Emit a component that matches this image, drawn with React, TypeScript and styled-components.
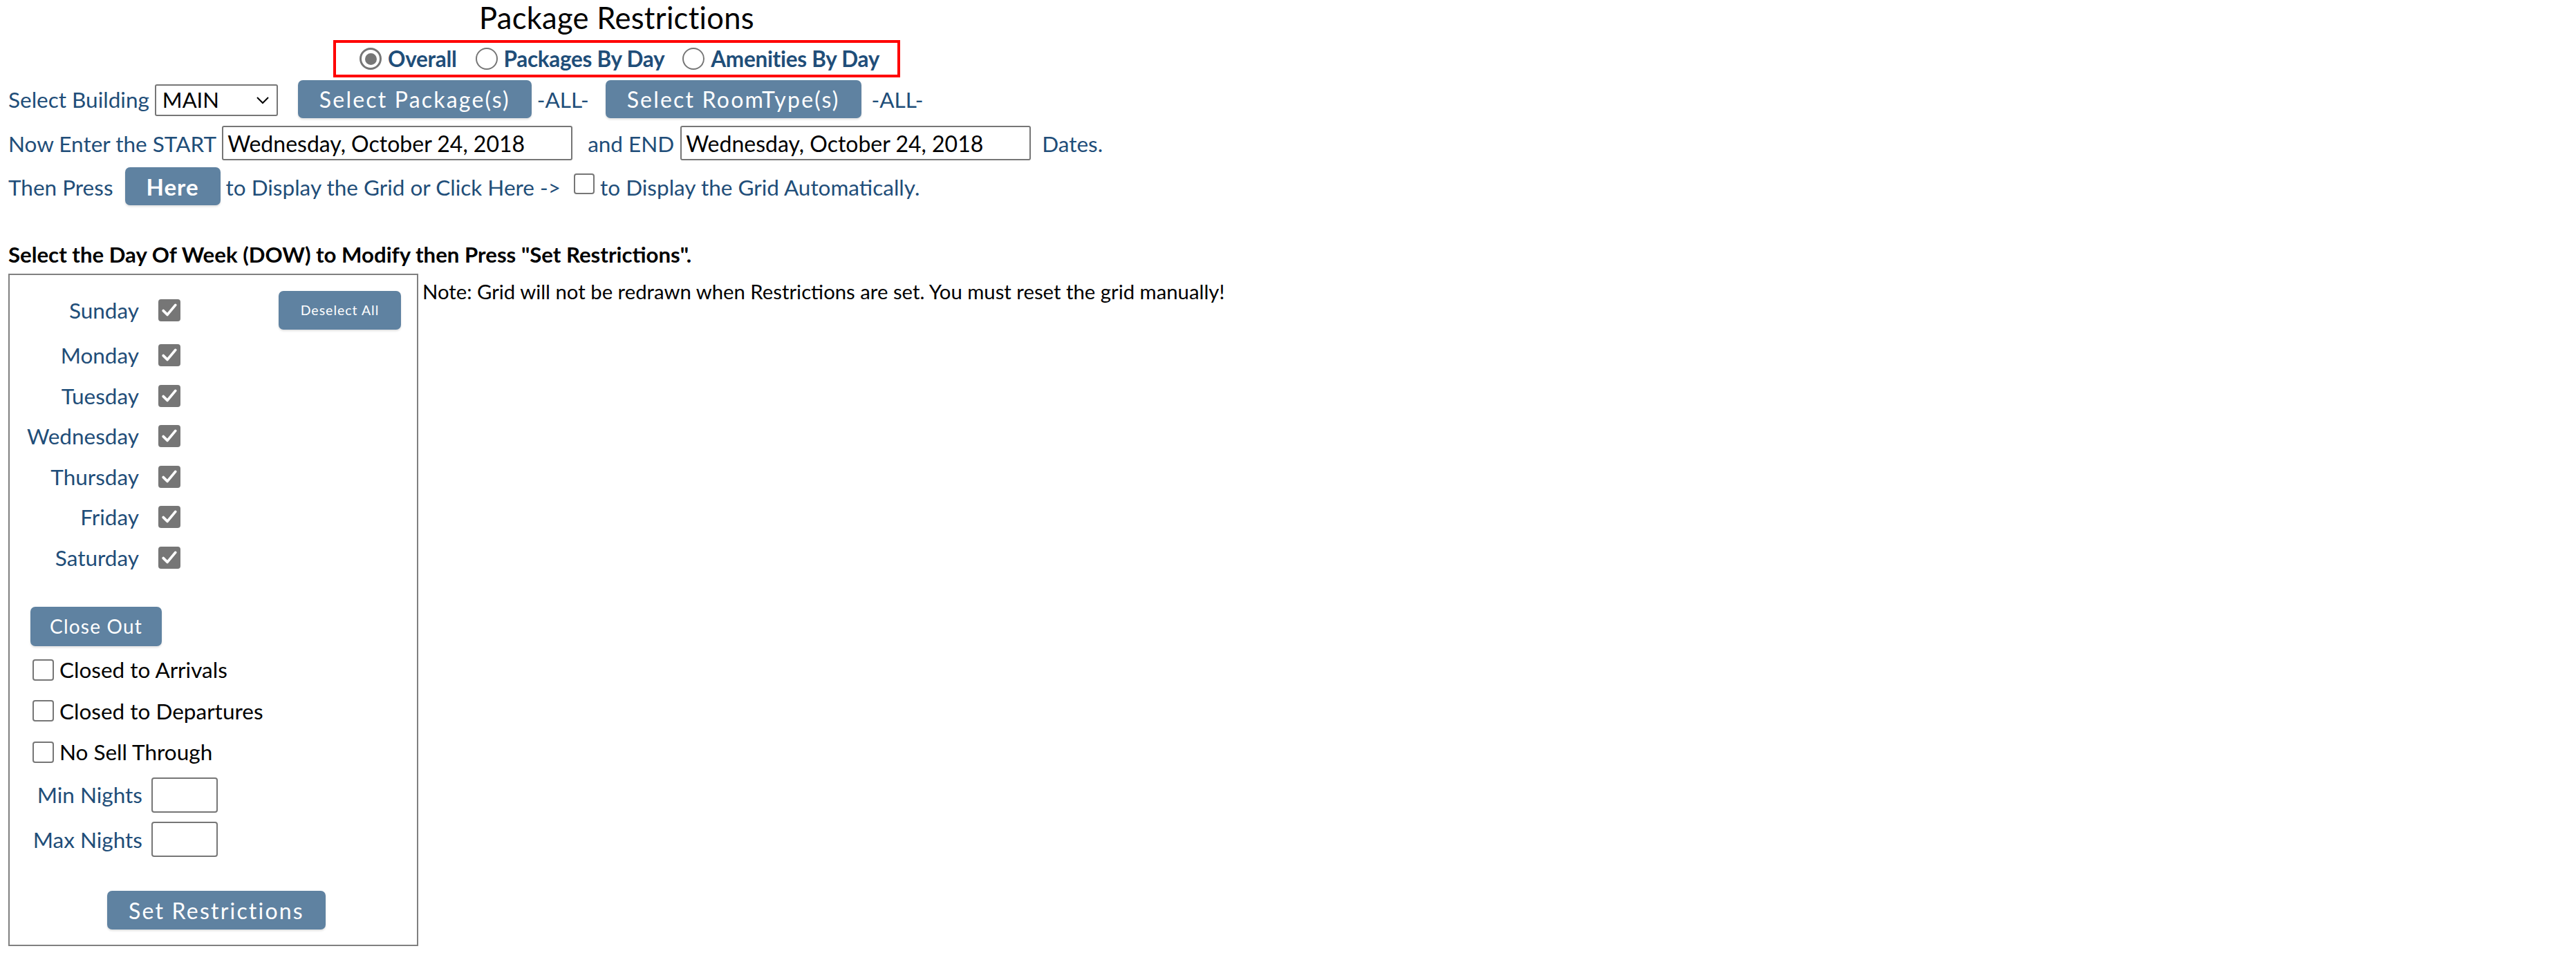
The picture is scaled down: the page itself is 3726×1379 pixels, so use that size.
import { Fragment } from "react";
import styled, { createGlobalStyle } from "styled-components";

const BLUE = "#1f4e79";
const GRAY = "#767676";
const BTN = "#5f82a1";

const GlobalStyle = createGlobalStyle`
  body {
    margin: 0;
    background: #ffffff;
    font-family: Lato, "Open Sans", sans-serif;
  }
`;

const days = ["Sunday", "Monday", "Tuesday", "Wednesday", "Thursday", "Friday", "Saturday"];
const options = ["Closed to Arrivals", "Closed to Departures", "No Sell Through"];

function Check({ checked, size = 32 }: { checked?: boolean; size?: number }) {
  return (
    <CheckBox $checked={checked} $size={size}>
      {checked && (
        <svg width={size - 4} height={size - 4} viewBox="0 0 24 24">
          <path d="M4.5 12.5 L9.5 17.5 L19.5 5.5" fill="none" stroke="#fff" strokeWidth="3.2" strokeLinecap="round" strokeLinejoin="round" />
        </svg>
      )}
    </CheckBox>
  );
}

export default function App() {
  return (
    <Page>
      <GlobalStyle />
      <Header>
        <Title>Package Restrictions</Title>
        <ModeGroup>
          <RadioOption>
            <RadioMark $checked />
            Overall
          </RadioOption>
          <RadioOption $gap={27}>
            <RadioMark />
            Packages By Day
          </RadioOption>
          <RadioOption $gap={26}>
            <RadioMark />
            Amenities By Day
          </RadioOption>
        </ModeGroup>
      </Header>

      <Row $top={4}>
        <span>Select Building</span>
        <FakeSelect>
          <span>MAIN</span>
          <svg width="20" height="12" viewBox="0 0 20 12">
            <path d="M2 2 L10 10 L18 2" fill="none" stroke="#000" strokeWidth="2" />
          </svg>
        </FakeSelect>
        <ActionButton $left={29}>Select Package(s)</ActionButton>
        <Gap $left={8}>-ALL-</Gap>
        <ActionButton $left={24}>Select RoomType(s)</ActionButton>
        <Gap $left={15}>-ALL-</Gap>
      </Row>

      <Row $top={11}>
        <span>Now Enter the START</span>
        <DateInput readOnly value="Wednesday, October 24, 2018" $left={8} />
        <Gap $left={22}>and END</Gap>
        <DateInput readOnly value="Wednesday, October 24, 2018" $left={9} />
        <Gap $left={16}>Dates.</Gap>
      </Row>

      <Row $top={10}>
        <span>Then Press</span>
        <ActionButton $left={17} $bold>Here</ActionButton>
        <Gap $left={8}>to Display the Grid or Click Here -&gt;</Gap>
        <InlineCheck>
          <Check size={30} />
        </InlineCheck>
        <Gap $left={8}>to Display the Grid Automatically.</Gap>
      </Row>

      <DowHeading>Select the Day Of Week (DOW) to Modify then Press "Set Restrictions".</DowHeading>

      <Restrictions>
        <DowPanel>
          <DayGrid>
            {days.map((d, i) => (
              <Fragment key={d}>
                <DayLabel>{d}</DayLabel>
                <Check checked />
                {i === 0 ? <SmallButton>Deselect All</SmallButton> : <span />}
              </Fragment>
            ))}
          </DayGrid>

          <CloseOut>Close Out</CloseOut>

          {options.map((o, i) => (
            <OptionRow key={o} $first={i === 0}>
              <Check size={31} />
              {o}
            </OptionRow>
          ))}

          <NightsRow>
            <NightsLabel>Min Nights</NightsLabel>
            <NightsInput />
          </NightsRow>
          <NightsRow>
            <NightsLabel>Max Nights</NightsLabel>
            <NightsInput />
          </NightsRow>

          <SetButton>Set Restrictions</SetButton>
        </DowPanel>
        <Note>Note: Grid will not be redrawn when Restrictions are set. You must reset the grid manually!</Note>
      </Restrictions>
    </Page>
  );
}

const Page = styled.div`
  padding: 0 12px;
  color: ${BLUE};
  font-size: 31.5px;
`;

const Header = styled.div`
  width: 1760px;
  display: flex;
  flex-direction: column;
  align-items: center;
`;

const Title = styled.div`
  font-size: 43.5px;
  letter-spacing: 0.3px;
  line-height: 50px;
  color: #000;
`;

const ModeGroup = styled.div`
  margin-top: 8px;
  width: 820px;
  height: 54px;
  box-sizing: border-box;
  border: 4px solid #ff0000;
  display: flex;
  align-items: center;
  justify-content: center;
  padding-left: 8px;
`;

const RadioOption = styled.label<{ $gap?: number }>`
  display: flex;
  align-items: center;
  gap: 9px;
  margin-left: ${(p) => p.$gap ?? 0}px;
  font-weight: 700;
  font-size: 31.5px;
  color: ${BLUE};
  letter-spacing: -0.3px;
`;

const RadioMark = styled.span<{ $checked?: boolean }>`
  width: 32px;
  height: 32px;
  box-sizing: border-box;
  border-radius: 50%;
  border: ${(p) => (p.$checked ? 3.5 : 2.5)}px solid ${GRAY};
  display: inline-flex;
  align-items: center;
  justify-content: center;
  &::after {
    content: "";
    display: ${(p) => (p.$checked ? "block" : "none")};
    width: 17px;
    height: 17px;
    border-radius: 50%;
    background: ${GRAY};
  }
`;

const Row = styled.div<{ $top: number }>`
  display: flex;
  align-items: baseline;
  margin-top: ${(p) => p.$top}px;
  line-height: 1.2;
  white-space: nowrap;
`;

const Gap = styled.span<{ $left: number }>`
  margin-left: ${(p) => p.$left}px;
`;

const FakeSelect = styled.div`
  margin-left: 8px;
  width: 178px;
  height: 46px;
  box-sizing: border-box;
  border: 2px solid ${GRAY};
  border-radius: 3px;
  display: flex;
  align-items: center;
  justify-content: space-between;
  padding: 0 10px 0 9px;
  font-size: 31px;
  color: #000;
`;

const ActionButton = styled.button<{ $left?: number; $bold?: boolean }>`
  margin-left: ${(p) => p.$left ?? 0}px;
  height: 55px;
  padding: 0 31px;
  border: none;
  border-radius: 7px;
  background: ${BTN};
  color: #fff;
  font-family: Lato, sans-serif;
  font-size: ${(p) => (p.$bold ? 33 : 32)}px;
  font-weight: ${(p) => (p.$bold ? 700 : 400)};
  letter-spacing: ${(p) => (p.$bold ? 1 : 2.2)}px;
  box-shadow: 0 2px 3px rgba(0, 0, 0, 0.12);
`;

const DateInput = styled.input<{ $left: number }>`
  margin-left: ${(p) => p.$left}px;
  width: 507px;
  height: 50px;
  box-sizing: border-box;
  border: 2px solid ${GRAY};
  border-radius: 3px;
  padding: 0 6px;
  font-family: Lato, sans-serif;
  font-size: 32px;
  color: #000;
  outline: none;
`;

const InlineCheck = styled.span`
  margin-left: 19px;
  align-self: center;
`;

const CheckBox = styled.span<{ $checked?: boolean; $size: number }>`
  width: ${(p) => p.$size}px;
  height: ${(p) => p.$size}px;
  box-sizing: border-box;
  border-radius: 4px;
  border: 2px solid ${GRAY};
  background: ${(p) => (p.$checked ? GRAY : "#fff")};
  display: inline-flex;
  align-items: center;
  justify-content: center;
  flex-shrink: 0;
`;

const DowHeading = styled.div`
  margin-top: 53px;
  font-size: 31.2px;
  font-weight: 700;
  color: #000;
  line-height: 1.2;
`;

const Restrictions = styled.div`
  margin-top: 9px;
  display: flex;
  align-items: flex-start;
`;

const DowPanel = styled.div`
  width: 593px;
  box-sizing: border-box;
  border: 2px solid #808080;
  display: flex;
  flex-direction: column;
  align-items: flex-start;
  padding-bottom: 22px;
`;

const DayGrid = styled.div`
  display: grid;
  grid-template-columns: 187px 32px auto;
  grid-template-rows: 72px repeat(6, 58.5px);
  column-gap: 28px;
  align-items: center;
  padding-top: 14.5px;
`;

const DayLabel = styled.span`
  text-align: right;
`;

const SmallButton = styled.button`
  margin-left: 114px;
  height: 56px;
  width: 177px;
  border: none;
  border-radius: 7px;
  background: ${BTN};
  color: #fff;
  font-family: Lato, sans-serif;
  font-size: 19.5px;
  letter-spacing: 1px;
  box-shadow: 0 2px 3px rgba(0, 0, 0, 0.12);
`;

const CloseOut = styled.button`
  margin: 42px 0 0 30px;
  height: 57px;
  width: 190px;
  border: none;
  border-radius: 7px;
  background: ${BTN};
  color: #fff;
  font-family: Lato, sans-serif;
  font-size: 28px;
  letter-spacing: 1.2px;
  box-shadow: 0 2px 3px rgba(0, 0, 0, 0.12);
`;

const OptionRow = styled.div<{ $first?: boolean }>`
  margin-top: ${(p) => (p.$first ? 4.75 : 0)}px;
  height: 59.5px;
  display: flex;
  align-items: center;
  gap: 8px;
  padding-left: 33px;
  font-size: 31.5px;
  color: #000;
`;

const NightsRow = styled.div`
  height: 64.5px;
  display: grid;
  grid-template-columns: 192px 96px;
  column-gap: 13px;
  align-items: center;
`;

const NightsLabel = styled.span`
  text-align: right;
`;

const NightsInput = styled.input`
  width: 96px;
  height: 51px;
  box-sizing: border-box;
  border: 2px solid ${GRAY};
  border-radius: 4px;
  outline: none;
`;

const SetButton = styled.button`
  margin: 42px 0 0 9px;
  align-self: center;
  height: 56px;
  width: 316px;
  border: none;
  border-radius: 7px;
  background: ${BTN};
  color: #fff;
  font-family: Lato, sans-serif;
  font-size: 32px;
  letter-spacing: 2.2px;
  box-shadow: 0 2px 3px rgba(0, 0, 0, 0.12);
`;

const Note = styled.div`
  margin: 8px 0 0 6px;
  font-size: 29.3px;
  color: #000;
  line-height: 1.2;
  white-space: nowrap;
`;
